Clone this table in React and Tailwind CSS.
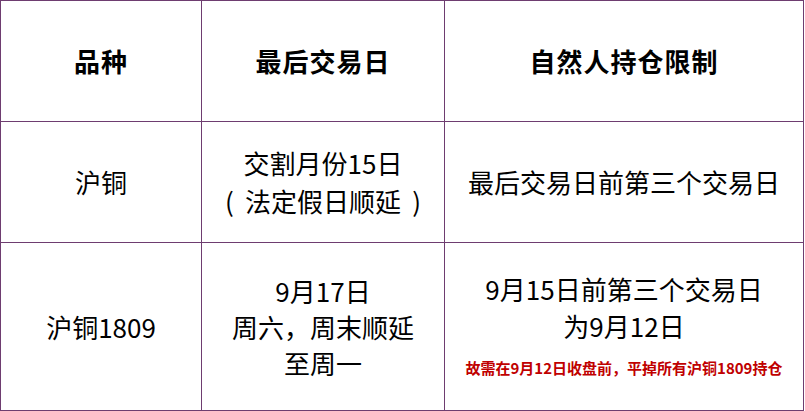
import React from 'react';

const cell = 'border-r border-b border-[#6e3d70] flex flex-col items-center justify-center text-center';

function App() {
  return (
    <div className="w-[805px] h-[411px] bg-white text-black" style={{ fontFamily: '"Microsoft YaHei", "Noto Sans CJK SC", sans-serif' }}>
      <div className="w-[804px] h-[411px] border-l border-t border-[#6e3d70] grid grid-cols-[201px_243px_359px] grid-rows-[121px_121px_168px]">
        {/* header */}
        <div className={cell}>
          <span className="text-[26px] font-bold leading-none tracking-[1px]">品种</span>
        </div>
        <div className={cell}>
          <span className="text-[26px] font-bold leading-none tracking-[1px]">最后交易日</span>
        </div>
        <div className={cell}>
          <span className="text-[26px] font-bold leading-none tracking-[1px]">自然人持仓限制</span>
        </div>

        {/* row 1 */}
        <div className={cell}>
          <span className="text-[26px] leading-[38px]">沪铜</span>
        </div>
        <div className={cell}>
          <p className="text-[26px] leading-[38px]">交割月份15日</p>
          <p className="text-[26px] leading-[38px]">
            <span className="inline-block w-[26px] pl-[6px] text-left">(</span>法定假日顺延<span className="inline-block w-[26px] pr-[6px] text-right">)</span>
          </p>
        </div>
        <div className={cell}>
          <span className="text-[26px] leading-[38px]">最后交易日前第三个交易日</span>
        </div>

        {/* row 2 */}
        <div className={cell}>
          <span className="text-[26px] leading-[38px]">沪铜1809</span>
        </div>
        <div className={cell}>
          <p className="text-[26px] leading-[36px]">9月17日</p>
          <p className="text-[26px] leading-[36px]">周六，周末顺延</p>
          <p className="text-[26px] leading-[36px]">至周一</p>
        </div>
        <div className={`${cell} pb-[6px]`}>
          <p className="text-[26px] leading-[37px]">9月15日前第三个交易日</p>
          <p className="text-[26px] leading-[37px]">为9月12日</p>
          <p className="mt-[14px] text-[15px] leading-[20px] font-bold text-[#c00000]">故需在9月12日收盘前，平掉所有沪铜1809持仓</p>
        </div>
      </div>
    </div>
  );
}

export default App;
